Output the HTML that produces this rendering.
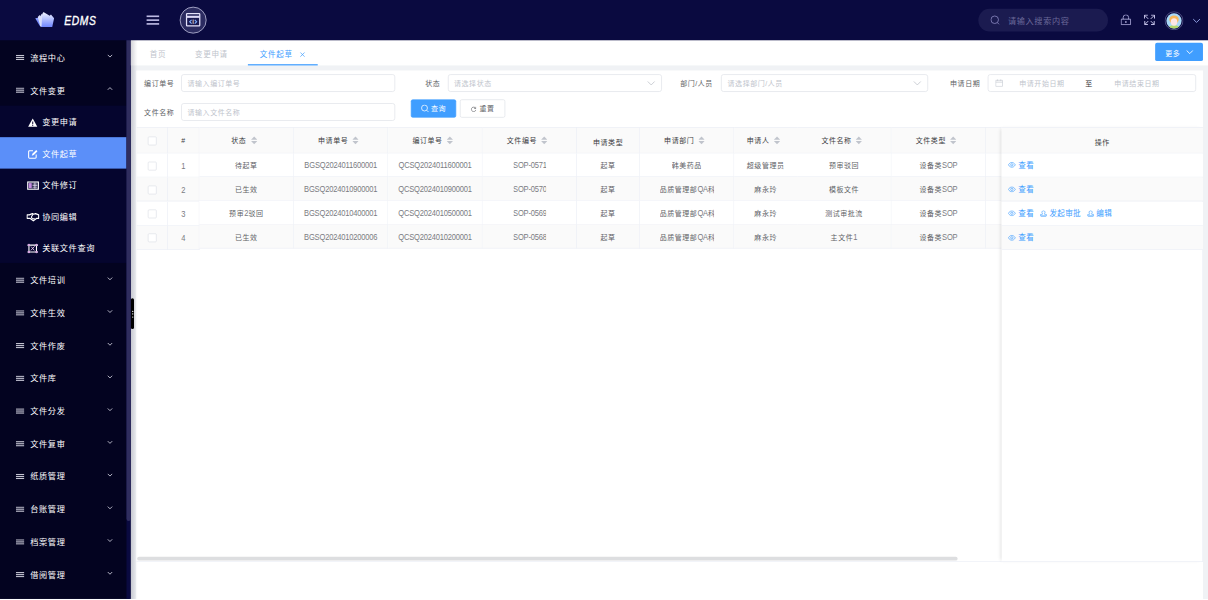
<!DOCTYPE html>
<html lang="zh-CN">
<head>
<meta charset="utf-8">
<title>EDMS</title>
<style>
*{box-sizing:border-box;margin:0;padding:0}
html,body{width:1208px;height:600px;overflow:hidden;background:#fff}
body{font-family:"Liberation Sans","Noto Sans CJK SC",sans-serif;font-size:11.1px;letter-spacing:0.9px;color:#606266}
#app{position:absolute;left:0;top:0;width:1920px;height:954px;transform:scale(0.6291667);transform-origin:0 0;overflow:hidden;background:#fff}
#bg{position:absolute;left:208px;top:64px;width:1712px;height:887.500px;background:#f0f2f5}
#lsh{position:absolute;left:208px;top:64px;width:11px;height:887.500px;background:linear-gradient(90deg,rgba(10,10,40,.18) 0,rgba(10,10,40,.10) 40%,rgba(10,10,40,.03) 75%,rgba(10,10,40,0) 100%);z-index:5}
#hand{z-index:7;position:absolute;left:208px;top:473.500px;width:5px;height:49px;border-radius:3px;background:#000}
#hand i{position:absolute;left:1.500px;width:2.200px;height:2.200px;border-radius:1.100px;background:#fff}
.abs{position:absolute}
/* header */
#hdr{position:absolute;left:0;top:0;width:1920px;height:64px;background:#0a0a40;z-index:6}
#logo{position:absolute;left:0;top:0;width:200px;height:64px}
#logo .t{position:absolute;left:102px;top:18px;font-size:20px;line-height:30px;font-weight:normal;font-style:italic;color:#fff;-webkit-text-stroke:0.55px #fff;letter-spacing:1.200px;transform:scaleX(0.82);transform-origin:0 50%}
/* sidebar */
#side{position:absolute;left:0;top:56px;width:206px;height:895.500px;padding-top:8px;background:#030320;overflow:hidden}
#sbar{position:absolute;left:200.500px;top:56px;width:7.500px;height:895.500px;background:#0a0a40}
#sbar i{position:absolute;left:0;top:0;width:7.500px;height:772px;background:#2f2d5e;border-radius:0 0 4px 4px}
.mi{position:relative;height:52px;line-height:56px;color:#fff;font-size:13px;letter-spacing:1px;padding-left:48px;white-space:nowrap}
.mi svg.ic{position:absolute;left:25px;top:22.500px}
.mi svg.ar{position:absolute;left:168.700px;top:20.600px}
.sub{background:#05052e}
.si{position:relative;height:50px;line-height:54px;color:#fff;font-size:13px;letter-spacing:1px;padding-left:67px;white-space:nowrap}
.si svg{position:absolute;left:44px;top:18.500px}
.si.on{background:#5b8ff9}
.sub{width:206px}
/* main */
#tabs{position:absolute;left:208px;top:64px;width:1712px;height:40px;background:#fff}
.tab{position:absolute;top:0;height:40px;line-height:44px;font-size:12px;letter-spacing:1px;color:#c0c4cc;white-space:nowrap}
.tab.on{color:#409eff}
#card{position:absolute;left:216px;top:112px;width:1696px;height:842px;background:#fff}
.lbl{position:absolute;font-size:11.1px;letter-spacing:0.9px;line-height:28px;height:28px;color:#606266;white-space:nowrap;text-align:right}
.inp{position:absolute;height:28px;border:1px solid #dcdfe6;border-radius:4px;background:#fff;font-size:11.1px;letter-spacing:0.9px;line-height:26px;color:#c0c4cc;padding-left:9px;white-space:nowrap}
.btn{position:absolute;height:29px;border-radius:3px;font-size:11.1px;letter-spacing:0.9px;line-height:27px;text-align:center;white-space:nowrap}

/* ---- generated main css ---- */
.tab i{font-style:normal}
#more{position:absolute;left:1628px;top:4px;width:76px;height:29px;border-radius:3px;background:#409eff;color:#fff;font-size:11.1px;letter-spacing:0.9px;line-height:35px;padding-left:16px}
.th{position:absolute;background:#fafafa;border-right:1px solid #ebeef5;border-bottom:1px solid #ebeef5;border-top:1px solid #ebeef5;color:#3a3c42;font-size:11.1px;letter-spacing:0.9px;font-weight:400;text-align:center;white-space:nowrap;overflow:hidden}
.td{position:absolute;border-right:1px solid #ebeef5;border-bottom:1px solid #ebeef5;color:#606266;font-size:11.1px;letter-spacing:0.9px;text-align:center;white-space:nowrap;overflow:hidden}
.la{font-size:12px;letter-spacing:-0.3px;color:#7a7c82;display:inline-block;line-height:1;transform:scaleY(1.25);transform-origin:50% 10.2px}
.lb{font-size:12px;letter-spacing:0;color:#7a7c82;display:inline-block;line-height:1;transform:scaleY(1.25);transform-origin:50% 10.2px}
.clip{display:inline-block;overflow:hidden;vertical-align:top;white-space:nowrap}
.srt{display:inline-block;width:10px;height:14px;margin:0 7px;vertical-align:middle;position:relative;top:-1.500px}
.ns{position:relative;top:2px}
.cb{position:absolute;left:18px;width:14px;height:14px;border:1px solid #dcdfe6;border-radius:2px;background:#fff}
.lnk{color:#409eff;font-size:12px;letter-spacing:0.5px;margin-right:9.500px;display:inline-block}
.lnk svg.stp{margin-right:4px}
.lnk svg{vertical-align:middle;margin-right:4px;position:relative;top:-1px}
#tbl{position:absolute;left:1px;top:90px;width:1695px;height:691px;border-bottom:1px solid #ebeef5;overflow:hidden}
#fix{position:absolute;left:1376px;top:90px;width:320px;height:691px;background:#fff;border-bottom:1px solid #ebeef5;border-right:1px solid #ebeef5;box-shadow:-4px 0 6px -3px rgba(0,0,0,.14)}
</style>
</head>
<body>
<div id="app">
<div id="hdr">
  <div id="logo">
    <svg class="abs" style="left:55px;top:18px" width="34" height="28" viewBox="0 0 34 28">
      <defs>
        <linearGradient id="lg1" x1="0" y1="0" x2="0" y2="1"><stop offset="0" stop-color="#f4f5ff"/><stop offset="1" stop-color="#6f86ff"/></linearGradient>
        <linearGradient id="lg2" x1="0" y1="0" x2="0" y2="1"><stop offset="0" stop-color="#8ea0ff"/><stop offset="1" stop-color="#5d76f5"/></linearGradient>
      </defs>
      <polygon points="1,11 9,10 12,25 8,23" fill="url(#lg2)"/>
      <polygon points="5,9 8,6 9,8 11,4 12,6 13,2 15,25 9,24" fill="#d9defc"/>
      <polygon points="12,6 14,1 24,7 26,5 31,11 28,25 11,25" fill="url(#lg1)"/>
    </svg>
    <span class="t">EDMS</span>
  </div>
  <svg class="abs" style="left:232px;top:24px" width="22" height="17" viewBox="0 0 22 17"><g fill="#bdbbe3"><rect x="1" y="0.6" width="20" height="2.6"/><rect x="1" y="6.7" width="20" height="2.6"/><rect x="1" y="12.7" width="20" height="2.6"/></g></svg>
  <svg class="abs" style="left:284px;top:9px" width="46" height="46" viewBox="0 0 46 46">
    <circle cx="23" cy="23" r="20.700" fill="#2b2b60" stroke="#c9c9e4" stroke-width="1.200"/>
    <rect x="12.5" y="12.5" width="21" height="19.5" rx="1" fill="#1a1a52" stroke="#e4e2fa" stroke-width="2"/>
    <rect x="12.5" y="16" width="21" height="3.4" fill="#dcd9f7"/>
    <path d="M20.5 22.5l-3 3 3 3M25.500 22.5l3 3-3 3" fill="none" stroke="#7fb0ff" stroke-width="1.8"/>
    <path d="M23 22v7" stroke="#ffd9c0" stroke-width="1.4"/>
  </svg>
  <div class="abs" style="left:1555px;top:14px;width:206px;height:36px;border-radius:18px;background:#1b1b50"></div>
  <svg class="abs" style="left:1574px;top:24px" width="16" height="16" viewBox="0 0 16 16"><circle cx="7" cy="7.4" r="6" fill="none" stroke="#8a88c0" stroke-width="1.3"/><path d="M11.300 12l2.600 2.600" stroke="#8a88c0" stroke-width="1.3"/></svg>
  <div class="abs" style="left:1602px;top:14px;height:36px;line-height:39px;font-size:13px;letter-spacing:1px;color:#6a6898;white-space:nowrap">请输入搜索内容</div>
  <svg class="abs" style="left:1781px;top:23px" width="17" height="17" viewBox="0 0 17 17"><path d="M1 7.500h15v8.700h-15zM4.200 7.500v-2.700a4.300 4.300 0 0 1 8.600 0v2.700" fill="none" stroke="#b9b7e6" stroke-width="1.300"/><path d="M8.500 10.300v3.200" stroke="#b9b7e6" stroke-width="1.800"/></svg>
  <svg class="abs" style="left:1818px;top:23px" width="18" height="17" viewBox="0 0 18 17"><g fill="none" stroke="#d0cef2" stroke-width="1.500"><path d="M1 6.500v-5.500h5.500M1.500 1.500l5.500 5.500"/><path d="M17 6.500v-5.500h-5.500M16.500 1.500l-5.500 5.500"/><path d="M1.500 10.500v5.500h5M7 10.500l-5.500 5.500" /><path d="M16.500 10.500v5.500h-5M11 10.500l5.500 5.500"/></g></svg>
  <svg class="abs" style="left:1851px;top:17.500px" width="30" height="30" viewBox="0 0 30 30">
    <defs><clipPath id="av"><circle cx="15" cy="15" r="12.100"/></clipPath></defs>
    <circle cx="15" cy="15" r="14.300" fill="none" stroke="#8482b4" stroke-width="0.900"/>
    <g clip-path="url(#av)">
      <rect x="0" y="0" width="30" height="30" fill="#a9d9f7"/>
      <ellipse cx="15" cy="27" rx="9" ry="5" fill="#b5d96a"/>
      <ellipse cx="15" cy="13" rx="7.500" ry="6.500" fill="#f7b65a"/>
      <ellipse cx="15" cy="17" rx="5.200" ry="5.800" fill="#fde6e4"/>
    </g>
  </svg>
  <svg class="abs" style="left:1895px;top:28.500px" width="14" height="9" viewBox="0 0 14 9"><path d="M1.500 1.300l5.300 5.300 5.300-5.300" fill="none" stroke="#9fb0f5" stroke-width="1.400"/></svg>
</div>
<div id="bg"></div>
<div id="side">
<div class="mi" style="line-height:57px"><svg class="ic" width="14" height="9" viewBox="0 0 14 9"><g fill="#c4c4d2"><rect x="0.300" y="0.200" width="13.200" height="1.800"/><rect x="0.300" y="3.400" width="13.200" height="1.800"/><rect x="0.300" y="6.600" width="13.200" height="1.800"/></g></svg>流程中心<svg class="ar" width="12" height="8" viewBox="0 0 12 8"><path d="M2.300 2.200l3.500 3.500 3.500-3.500" fill="none" stroke="#dcdce8" stroke-width="1.300"/></svg></div>
<div class="mi" style="line-height:57px"><svg class="ic" width="14" height="9" viewBox="0 0 14 9"><g fill="#c4c4d2"><rect x="0.300" y="0.200" width="13.200" height="1.800"/><rect x="0.300" y="3.400" width="13.200" height="1.800"/><rect x="0.300" y="6.600" width="13.200" height="1.800"/></g></svg>文件变更<svg class="ar" width="12" height="8" viewBox="0 0 12 8"><path d="M2.300 5.700l3.500-3.500 3.500 3.500" fill="none" stroke="#dcdce8" stroke-width="1.300"/></svg></div>
<div class="sub">
<div class="si"><svg width="16" height="16" viewBox="0 0 16 16"><path d="M8 1.500L15.300 14.500H0.700z" fill="#fff"/><path d="M8 6v4.300" stroke="#1b1440" stroke-width="1.700"/><circle cx="8" cy="12.200" r="1" fill="#1b1440"/></svg>变更申请</div>
<div class="si on"><svg width="16" height="16" viewBox="0 0 16 16"><path d="M13.500 8.500v4.500a1.500 1.500 0 0 1-1.500 1.500h-9a1.500 1.500 0 0 1-1.500-1.500v-9a1.500 1.500 0 0 1 1.500-1.500h5.500" fill="none" stroke="#fff" stroke-width="1.700"/><path d="M6.500 10.500l1-3.200 6-6 2.200 2.200-6 6z" fill="#fff"/></svg>文件起草</div>
<div class="si"><svg width="19" height="16" viewBox="0 0 19 16" style="left:42.500px"><rect x="1" y="2.300" width="17" height="11.400" fill="none" stroke="#fff" stroke-width="1.800"/><rect x="2.500" y="4" width="5" height="8" fill="#c48de0"/><path d="M8.500 5.500h8M8.500 8h8M8.500 10.500h8M12.500 3v10" stroke="#e8e4f4" stroke-width="1.300"/></svg>文件修订</div>
<div class="si"><svg width="21" height="16" viewBox="0 0 21 16" style="left:41.500px"><path d="M1 4.500h3.500l5-2 2 1 3-1 5 2v5.500h-3l-5.500 4-5.500-4h-4.500z" fill="none" stroke="#fff" stroke-width="1.900" stroke-linejoin="round"/><path d="M8 7.500a3 3 0 0 0 5 2.500M10.500 3.500l-2.500 4" fill="none" stroke="#fff" stroke-width="1.700"/></svg>协同编辑</div>
<div class="si"><svg width="18" height="16" viewBox="0 0 18 16" style="left:43px"><path d="M3 0.500v15M15 0.500v15M0.500 2.500h17M0.500 13.500h17" stroke="#fff" stroke-width="1.800" fill="none"/><path d="M6 11l6-6.500M6.500 5l5 6" stroke="#e9c4ee" stroke-width="1.400"/><path d="M1.500 1h3v3h-3zM13.500 1h3v3h-3zM1.500 12h3v3h-3zM13.500 12h3v3h-3z" fill="#d9a6e4"/></svg>关联文件查询</div>
</div>
<div class="mi"><svg class="ic" width="14" height="9" viewBox="0 0 14 9"><g fill="#c4c4d2"><rect x="0.300" y="0.200" width="13.200" height="1.800"/><rect x="0.300" y="3.400" width="13.200" height="1.800"/><rect x="0.300" y="6.600" width="13.200" height="1.800"/></g></svg>文件培训<svg class="ar" width="12" height="8" viewBox="0 0 12 8"><path d="M2.300 2.200l3.500 3.500 3.500-3.500" fill="none" stroke="#dcdce8" stroke-width="1.300"/></svg></div>
<div class="mi"><svg class="ic" width="14" height="9" viewBox="0 0 14 9"><g fill="#c4c4d2"><rect x="0.300" y="0.200" width="13.200" height="1.800"/><rect x="0.300" y="3.400" width="13.200" height="1.800"/><rect x="0.300" y="6.600" width="13.200" height="1.800"/></g></svg>文件生效<svg class="ar" width="12" height="8" viewBox="0 0 12 8"><path d="M2.300 2.200l3.500 3.500 3.500-3.500" fill="none" stroke="#dcdce8" stroke-width="1.300"/></svg></div>
<div class="mi"><svg class="ic" width="14" height="9" viewBox="0 0 14 9"><g fill="#c4c4d2"><rect x="0.300" y="0.200" width="13.200" height="1.800"/><rect x="0.300" y="3.400" width="13.200" height="1.800"/><rect x="0.300" y="6.600" width="13.200" height="1.800"/></g></svg>文件作废<svg class="ar" width="12" height="8" viewBox="0 0 12 8"><path d="M2.300 2.200l3.500 3.500 3.500-3.500" fill="none" stroke="#dcdce8" stroke-width="1.300"/></svg></div>
<div class="mi"><svg class="ic" width="14" height="9" viewBox="0 0 14 9"><g fill="#c4c4d2"><rect x="0.300" y="0.200" width="13.200" height="1.800"/><rect x="0.300" y="3.400" width="13.200" height="1.800"/><rect x="0.300" y="6.600" width="13.200" height="1.800"/></g></svg>文件库<svg class="ar" width="12" height="8" viewBox="0 0 12 8"><path d="M2.300 2.200l3.500 3.500 3.500-3.500" fill="none" stroke="#dcdce8" stroke-width="1.300"/></svg></div>
<div class="mi"><svg class="ic" width="14" height="9" viewBox="0 0 14 9"><g fill="#c4c4d2"><rect x="0.300" y="0.200" width="13.200" height="1.800"/><rect x="0.300" y="3.400" width="13.200" height="1.800"/><rect x="0.300" y="6.600" width="13.200" height="1.800"/></g></svg>文件分发<svg class="ar" width="12" height="8" viewBox="0 0 12 8"><path d="M2.300 2.200l3.500 3.500 3.500-3.500" fill="none" stroke="#dcdce8" stroke-width="1.300"/></svg></div>
<div class="mi"><svg class="ic" width="14" height="9" viewBox="0 0 14 9"><g fill="#c4c4d2"><rect x="0.300" y="0.200" width="13.200" height="1.800"/><rect x="0.300" y="3.400" width="13.200" height="1.800"/><rect x="0.300" y="6.600" width="13.200" height="1.800"/></g></svg>文件复审<svg class="ar" width="12" height="8" viewBox="0 0 12 8"><path d="M2.300 2.200l3.500 3.500 3.500-3.500" fill="none" stroke="#dcdce8" stroke-width="1.300"/></svg></div>
<div class="mi"><svg class="ic" width="14" height="9" viewBox="0 0 14 9"><g fill="#c4c4d2"><rect x="0.300" y="0.200" width="13.200" height="1.800"/><rect x="0.300" y="3.400" width="13.200" height="1.800"/><rect x="0.300" y="6.600" width="13.200" height="1.800"/></g></svg>纸质管理<svg class="ar" width="12" height="8" viewBox="0 0 12 8"><path d="M2.300 2.200l3.500 3.500 3.500-3.500" fill="none" stroke="#dcdce8" stroke-width="1.300"/></svg></div>
<div class="mi"><svg class="ic" width="14" height="9" viewBox="0 0 14 9"><g fill="#c4c4d2"><rect x="0.300" y="0.200" width="13.200" height="1.800"/><rect x="0.300" y="3.400" width="13.200" height="1.800"/><rect x="0.300" y="6.600" width="13.200" height="1.800"/></g></svg>台账管理<svg class="ar" width="12" height="8" viewBox="0 0 12 8"><path d="M2.300 2.200l3.500 3.500 3.500-3.500" fill="none" stroke="#dcdce8" stroke-width="1.300"/></svg></div>
<div class="mi"><svg class="ic" width="14" height="9" viewBox="0 0 14 9"><g fill="#c4c4d2"><rect x="0.300" y="0.200" width="13.200" height="1.800"/><rect x="0.300" y="3.400" width="13.200" height="1.800"/><rect x="0.300" y="6.600" width="13.200" height="1.800"/></g></svg>档案管理<svg class="ar" width="12" height="8" viewBox="0 0 12 8"><path d="M2.300 2.200l3.500 3.500 3.500-3.500" fill="none" stroke="#dcdce8" stroke-width="1.300"/></svg></div>
<div class="mi"><svg class="ic" width="14" height="9" viewBox="0 0 14 9"><g fill="#c4c4d2"><rect x="0.300" y="0.200" width="13.200" height="1.800"/><rect x="0.300" y="3.400" width="13.200" height="1.800"/><rect x="0.300" y="6.600" width="13.200" height="1.800"/></g></svg>借阅管理<svg class="ar" width="12" height="8" viewBox="0 0 12 8"><path d="M2.300 2.200l3.500 3.500 3.500-3.500" fill="none" stroke="#dcdce8" stroke-width="1.300"/></svg></div>
</div>
<div id="sbar"><i></i></div>
<div id="lsh"></div>
<div id="tabs">
<div class="tab" style="left:30px">首页</div>
<div class="tab" style="left:102px">变更申请</div>
<div class="tab on" style="left:205px">文件起草</div>
<svg class="abs" style="left:267.500px;top:18px" width="9.500" height="9.500" viewBox="0 0 10 10"><path d="M1.500 1.500l7 7M8.500 1.500l-7 7" stroke="#409eff" stroke-width="1.200"/></svg>
<div class="abs" style="left:186px;top:38px;width:111px;height:1.800px;background:#409eff"></div>
<div id="more">更多<svg class="abs" style="left:49px;top:11px" width="12" height="8" viewBox="0 0 12 8"><path d="M1 1.200l5 5 5-5" fill="none" stroke="#fff" stroke-width="1.400"/></svg></div>
</div>
<div id="card">
<div class="lbl" style="left:-39px;width:100px;top:6px">编订单号</div>
<div class="inp" style="left:72.0px;width:339.5px;top:6px">请输入编订单号</div>
<div class="lbl" style="left:384px;width:100px;top:6px">状态</div>
<div class="inp" style="left:495.6px;width:340.1px;top:6px">请选择状态<svg class="abs" style="right:9px;top:9px" width="14" height="9" viewBox="0 0 14 9"><path d="M1.500 1.500l5.500 5.500 5.500-5.500" fill="none" stroke="#c0c4cc" stroke-width="1.300"/></svg></div>
<div class="lbl" style="left:817px;width:100px;top:6px">部门/人员</div>
<div class="inp" style="left:930.4px;width:329.1px;top:6px">请选择部门/人员<svg class="abs" style="right:9px;top:9px" width="14" height="9" viewBox="0 0 14 9"><path d="M1.500 1.500l5.500 5.500 5.500-5.500" fill="none" stroke="#c0c4cc" stroke-width="1.300"/></svg></div>
<div class="lbl" style="left:1242px;width:100px;top:6px">申请日期</div>
<div class="inp" style="left:1354.0px;width:331.0px;top:6px;padding:0"><svg class="abs" style="left:11px;top:7px" width="12" height="12" viewBox="0 0 12 12"><path d="M0.600 1.600h10.800v9.800h-10.800zM0.600 4.600h10.800M3.500 0v2.500M8.500 0v2.500" fill="none" stroke="#c0c4cc" stroke-width="1"/></svg><span class="abs" style="left:49px;top:0">申请开始日期</span><span class="abs" style="left:154px;top:0;color:#303133">至</span><span class="abs" style="left:200px;top:0">申请结束日期</span></div>
<div class="lbl" style="left:-39px;width:100px;top:52px">文件名称</div>
<div class="inp" style="left:72.0px;width:339.5px;top:52px">请输入文件名称</div>
<div class="btn" style="left:437px;top:46.0px;width:72px;background:#409eff;border:1px solid #409eff;color:#fff;text-align:left;padding-left:31px"><svg class="abs" style="left:15px;top:7px" width="13" height="13" viewBox="0 0 13 13"><circle cx="5.700" cy="5.700" r="4.700" fill="none" stroke="#fff" stroke-width="1.200"/><path d="M9.200 9.200l3 3" stroke="#fff" stroke-width="1.200"/></svg>查询</div>
<div class="btn" style="left:515px;top:46.0px;width:72px;background:#fff;border:1px solid #dcdfe6;color:#606266;text-align:left;padding-left:30px"><svg class="abs" style="left:15.500px;top:9.500px" width="9.500" height="9.500" viewBox="0 0 11 11"><path d="M9.300 3.500a4.200 4.200 0 1 0 0.400 3" fill="none" stroke="#606266" stroke-width="1.200"/><path d="M9.800 0.800v3.200h-3.200" fill="none" stroke="#606266" stroke-width="1.200"/></svg>重置</div>
<div id="tbl">
<div class="th" style="left:0px;top:0.0px;width:50px;height:41.6px;line-height:46.0px;"><span class="cb" style="top:14.4px"></span></div>
<div class="th" style="left:50px;top:0.0px;width:50px;height:41.6px;line-height:42.8px;">#</div>
<div class="th" style="left:100px;top:0.0px;width:150px;height:41.6px;line-height:41.2px;">状态<svg class="srt" viewBox="0 0 10 14"><path d="M5 0.800l5 5.200h-10z" fill="#c0c4cc"/><path d="M5 13.200l5-5.200h-10z" fill="#c0c4cc"/></svg></div>
<div class="th" style="left:250px;top:0.0px;width:150px;height:41.6px;line-height:41.2px;">申请单号<svg class="srt" viewBox="0 0 10 14"><path d="M5 0.800l5 5.200h-10z" fill="#c0c4cc"/><path d="M5 13.200l5-5.200h-10z" fill="#c0c4cc"/></svg></div>
<div class="th" style="left:400px;top:0.0px;width:150px;height:41.6px;line-height:41.2px;">编订单号<svg class="srt" viewBox="0 0 10 14"><path d="M5 0.800l5 5.200h-10z" fill="#c0c4cc"/><path d="M5 13.200l5-5.200h-10z" fill="#c0c4cc"/></svg></div>
<div class="th" style="left:550px;top:0.0px;width:150px;height:41.6px;line-height:41.2px;">文件编号<svg class="srt" viewBox="0 0 10 14"><path d="M5 0.800l5 5.200h-10z" fill="#c0c4cc"/><path d="M5 13.200l5-5.200h-10z" fill="#c0c4cc"/></svg></div>
<div class="th" style="left:700px;top:0.0px;width:100px;height:41.6px;line-height:46.0px;">申请类型</div>
<div class="th" style="left:800px;top:0.0px;width:150px;height:41.6px;line-height:41.2px;">申请部门<svg class="srt" viewBox="0 0 10 14"><path d="M5 0.800l5 5.200h-10z" fill="#c0c4cc"/><path d="M5 13.200l5-5.200h-10z" fill="#c0c4cc"/></svg></div>
<div class="th" style="left:950px;top:0.0px;width:100px;height:41.6px;line-height:41.2px;border-right:none;">申请人<svg class="srt" viewBox="0 0 10 14"><path d="M5 0.800l5 5.200h-10z" fill="#c0c4cc"/><path d="M5 13.200l5-5.200h-10z" fill="#c0c4cc"/></svg></div>
<div class="th" style="left:1050px;top:0.0px;width:150px;height:41.6px;line-height:41.2px;">文件名称<svg class="srt" viewBox="0 0 10 14"><path d="M5 0.800l5 5.200h-10z" fill="#c0c4cc"/><path d="M5 13.200l5-5.200h-10z" fill="#c0c4cc"/></svg></div>
<div class="th" style="left:1200px;top:0.0px;width:150px;height:41.6px;line-height:41.2px;">文件类型<svg class="srt" viewBox="0 0 10 14"><path d="M5 0.800l5 5.200h-10z" fill="#c0c4cc"/><path d="M5 13.200l5-5.200h-10z" fill="#c0c4cc"/></svg></div>
<div class="th" style="left:1350px;top:0.0px;width:200px;height:41.6px;line-height:46.0px;"></div>
<div class="td" style="left:0px;top:41.6px;width:50px;height:38.7px;line-height:42.0px;background:#fff;"><span class="cb" style="top:13.8px"></span></div>
<div class="td" style="left:50px;top:41.6px;width:50px;height:38.7px;line-height:42.0px;background:#fff;"><span class="lb">1</span></div>
<div class="td" style="left:100px;top:41.6px;width:150px;height:37.1px;line-height:39.0px;background:#fff;">待起草</div>
<div class="td" style="left:250px;top:41.6px;width:150px;height:37.1px;line-height:39.0px;background:#fff;"><span class="la">BGSQ2024011600001</span></div>
<div class="td" style="left:400px;top:41.6px;width:150px;height:37.1px;line-height:39.0px;background:#fff;"><span class="la">QCSQ2024011600001</span></div>
<div class="td" style="left:550px;top:41.6px;width:150px;height:37.1px;line-height:39.0px;background:#fff;"><span class="clip" style="max-width:52px"><span class="la">SOP-0571</span></span></div>
<div class="td" style="left:700px;top:41.6px;width:100px;height:37.1px;line-height:39.0px;background:#fff;">起草</div>
<div class="td" style="left:800px;top:41.6px;width:150px;height:37.1px;line-height:39.0px;background:#fff;"><span class="clip" style="max-width:86px">韩美药品</span></div>
<div class="td" style="left:950px;top:41.6px;width:100px;height:37.1px;line-height:39.0px;background:#fff;border-right:none;">超级管理员</div>
<div class="td" style="left:1050px;top:41.6px;width:150px;height:37.1px;line-height:39.0px;background:#fff;">预审驳回</div>
<div class="td" style="left:1200px;top:41.6px;width:150px;height:37.1px;line-height:39.0px;background:#fff;">设备类<span class="la">SOP</span></div>
<div class="td" style="left:1350px;top:41.6px;width:200px;height:37.1px;line-height:39.0px;background:#fff;"></div>
<div class="td" style="left:0px;top:80.3px;width:50px;height:38.2px;line-height:42.3px;background:#fafafa;"><span class="cb" style="top:13.1px"></span></div>
<div class="td" style="left:50px;top:80.3px;width:50px;height:38.2px;line-height:42.3px;background:#fafafa;"><span class="lb">2</span></div>
<div class="td" style="left:100px;top:78.7px;width:150px;height:38.3px;line-height:41.0px;background:#fafafa;">已生效</div>
<div class="td" style="left:250px;top:78.7px;width:150px;height:38.3px;line-height:41.0px;background:#fafafa;"><span class="la">BGSQ2024010900001</span></div>
<div class="td" style="left:400px;top:78.7px;width:150px;height:38.3px;line-height:41.0px;background:#fafafa;"><span class="la">QCSQ2024010900001</span></div>
<div class="td" style="left:550px;top:78.7px;width:150px;height:38.3px;line-height:41.0px;background:#fafafa;"><span class="clip" style="max-width:52px"><span class="la">SOP-0570</span></span></div>
<div class="td" style="left:700px;top:78.7px;width:100px;height:38.3px;line-height:41.0px;background:#fafafa;">起草</div>
<div class="td" style="left:800px;top:78.7px;width:150px;height:38.3px;line-height:41.0px;background:#fafafa;"><span class="clip" style="max-width:86px">品质管理部<span class="la">QA</span>科</span></div>
<div class="td" style="left:950px;top:78.7px;width:100px;height:38.3px;line-height:41.0px;background:#fafafa;border-right:none;">麻永玲</div>
<div class="td" style="left:1050px;top:78.7px;width:150px;height:38.3px;line-height:41.0px;background:#fafafa;">模板文件</div>
<div class="td" style="left:1200px;top:78.7px;width:150px;height:38.3px;line-height:41.0px;background:#fafafa;">设备类<span class="la">SOP</span></div>
<div class="td" style="left:1350px;top:78.7px;width:200px;height:38.3px;line-height:41.0px;background:#fafafa;"></div>
<div class="td" style="left:0px;top:118.5px;width:50px;height:38.2px;line-height:40.6px;background:#fff;"><span class="cb" style="top:12.9px"></span></div>
<div class="td" style="left:50px;top:118.5px;width:50px;height:38.2px;line-height:40.6px;background:#fff;"><span class="lb">3</span></div>
<div class="td" style="left:100px;top:117.0px;width:150px;height:38.1px;line-height:41.6px;background:#fff;">预审<span class="lb">2</span>驳回</div>
<div class="td" style="left:250px;top:117.0px;width:150px;height:38.1px;line-height:41.6px;background:#fff;"><span class="la">BGSQ2024010400001</span></div>
<div class="td" style="left:400px;top:117.0px;width:150px;height:38.1px;line-height:41.6px;background:#fff;"><span class="la">QCSQ2024010500001</span></div>
<div class="td" style="left:550px;top:117.0px;width:150px;height:38.1px;line-height:41.6px;background:#fff;"><span class="clip" style="max-width:52px"><span class="la">SOP-0569</span></span></div>
<div class="td" style="left:700px;top:117.0px;width:100px;height:38.1px;line-height:41.6px;background:#fff;">起草</div>
<div class="td" style="left:800px;top:117.0px;width:150px;height:38.1px;line-height:41.6px;background:#fff;"><span class="clip" style="max-width:86px">品质管理部<span class="la">QA</span>科</span></div>
<div class="td" style="left:950px;top:117.0px;width:100px;height:38.1px;line-height:41.6px;background:#fff;border-right:none;">麻永玲</div>
<div class="td" style="left:1050px;top:117.0px;width:150px;height:38.1px;line-height:41.6px;background:#fff;">测试审批流</div>
<div class="td" style="left:1200px;top:117.0px;width:150px;height:38.1px;line-height:41.6px;background:#fff;">设备类<span class="la">SOP</span></div>
<div class="td" style="left:1350px;top:117.0px;width:200px;height:38.1px;line-height:41.6px;background:#fff;"></div>
<div class="td" style="left:0px;top:156.7px;width:50px;height:38.2px;line-height:40.9px;background:#fafafa;"><span class="cb" style="top:12.7px"></span></div>
<div class="td" style="left:50px;top:156.7px;width:50px;height:38.2px;line-height:40.9px;background:#fafafa;"><span class="lb">4</span></div>
<div class="td" style="left:100px;top:155.1px;width:150px;height:38.0px;line-height:42.1px;background:#fafafa;">已生效</div>
<div class="td" style="left:250px;top:155.1px;width:150px;height:38.0px;line-height:42.1px;background:#fafafa;"><span class="la">BGSQ2024010200006</span></div>
<div class="td" style="left:400px;top:155.1px;width:150px;height:38.0px;line-height:42.1px;background:#fafafa;"><span class="la">QCSQ2024010200001</span></div>
<div class="td" style="left:550px;top:155.1px;width:150px;height:38.0px;line-height:42.1px;background:#fafafa;"><span class="clip" style="max-width:52px"><span class="la">SOP-0568</span></span></div>
<div class="td" style="left:700px;top:155.1px;width:100px;height:38.0px;line-height:42.1px;background:#fafafa;">起草</div>
<div class="td" style="left:800px;top:155.1px;width:150px;height:38.0px;line-height:42.1px;background:#fafafa;"><span class="clip" style="max-width:86px">品质管理部<span class="la">QA</span>科</span></div>
<div class="td" style="left:950px;top:155.1px;width:100px;height:38.0px;line-height:42.1px;background:#fafafa;border-right:none;">麻永玲</div>
<div class="td" style="left:1050px;top:155.1px;width:150px;height:38.0px;line-height:42.1px;background:#fafafa;">主文件<span class="lb">1</span></div>
<div class="td" style="left:1200px;top:155.1px;width:150px;height:38.0px;line-height:42.1px;background:#fafafa;">设备类<span class="la">SOP</span></div>
<div class="td" style="left:1350px;top:155.1px;width:200px;height:38.0px;line-height:42.1px;background:#fafafa;"></div>
<div class="abs" style="left:1px;top:683px;width:1304px;height:6px;border-radius:3px;background:#dddee0"></div>
</div>
<div id="fix">
<div class="th" style="left:0px;top:0.0px;width:320px;height:41.6px;line-height:46.0px;border-right:none;">操作</div>
<div class="td" style="left:0px;top:41.6px;width:320px;height:38.7px;line-height:39.0px;text-align:left;padding-left:10px;border-right:none;background:#fff;"><span class="lnk"><svg width="12.500" height="10" viewBox="0 0 12 10" preserveAspectRatio="none"><path d="M0.700 5c1.500-2.600 3.300-3.800 5.300-3.800s3.800 1.200 5.300 3.800c-1.500 2.600-3.300 3.800-5.300 3.800s-3.800-1.200-5.300-3.800z" fill="none" stroke="#409eff" stroke-width="1"/><circle cx="6" cy="5" r="1.800" fill="none" stroke="#409eff" stroke-width="1"/></svg>查看</span></div>
<div class="td" style="left:0px;top:80.3px;width:320px;height:38.2px;line-height:39.3px;text-align:left;padding-left:10px;border-right:none;background:#fafafa;"><span class="lnk"><svg width="12.500" height="10" viewBox="0 0 12 10" preserveAspectRatio="none"><path d="M0.700 5c1.500-2.600 3.300-3.800 5.300-3.800s3.800 1.200 5.300 3.800c-1.500 2.600-3.300 3.800-5.300 3.800s-3.800-1.200-5.300-3.800z" fill="none" stroke="#409eff" stroke-width="1"/><circle cx="6" cy="5" r="1.800" fill="none" stroke="#409eff" stroke-width="1"/></svg>查看</span></div>
<div class="td" style="left:0px;top:118.5px;width:320px;height:38.2px;line-height:38.6px;text-align:left;padding-left:10px;border-right:none;background:#fff;"><span class="lnk"><svg width="12.500" height="10" viewBox="0 0 12 10" preserveAspectRatio="none"><path d="M0.700 5c1.500-2.600 3.300-3.800 5.300-3.800s3.800 1.200 5.300 3.800c-1.500 2.600-3.300 3.800-5.300 3.800s-3.800-1.200-5.300-3.800z" fill="none" stroke="#409eff" stroke-width="1"/><circle cx="6" cy="5" r="1.800" fill="none" stroke="#409eff" stroke-width="1"/></svg>查看</span><span class="lnk"><svg class="stp" width="11" height="11.500" viewBox="0 0 12 12"><path d="M6 0.800a2.700 2.700 0 0 1 1.700 4.800l0.300 1.400h2.500a1 1 0 0 1 1 1v1.500h-11v-1.500a1 1 0 0 1 1-1h2.500l0.300-1.400a2.700 2.700 0 0 1 1.700-4.800zM1.500 11.300h9" fill="none" stroke="#409eff" stroke-width="1.100"/></svg>发起审批</span><span class="lnk"><svg class="stp" width="11" height="11.500" viewBox="0 0 12 12"><path d="M6 0.800a2.700 2.700 0 0 1 1.700 4.800l0.300 1.400h2.500a1 1 0 0 1 1 1v1.500h-11v-1.500a1 1 0 0 1 1-1h2.500l0.300-1.400a2.700 2.700 0 0 1 1.700-4.800zM1.500 11.300h9" fill="none" stroke="#409eff" stroke-width="1.100"/></svg>编辑</span></div>
<div class="td" style="left:0px;top:156.7px;width:320px;height:38.2px;line-height:38.9px;text-align:left;padding-left:10px;border-right:none;background:#fafafa;"><span class="lnk"><svg width="12.500" height="10" viewBox="0 0 12 10" preserveAspectRatio="none"><path d="M0.700 5c1.500-2.600 3.300-3.800 5.300-3.800s3.800 1.200 5.300 3.800c-1.500 2.600-3.300 3.800-5.300 3.800s-3.800-1.200-5.300-3.800z" fill="none" stroke="#409eff" stroke-width="1"/><circle cx="6" cy="5" r="1.800" fill="none" stroke="#409eff" stroke-width="1"/></svg>查看</span></div>
</div>
</div>
<div id="hand"><i style="top:20.500px"></i><i style="top:24.800px"></i><i style="top:29.100px"></i></div>
</div>
</body>
</html>
